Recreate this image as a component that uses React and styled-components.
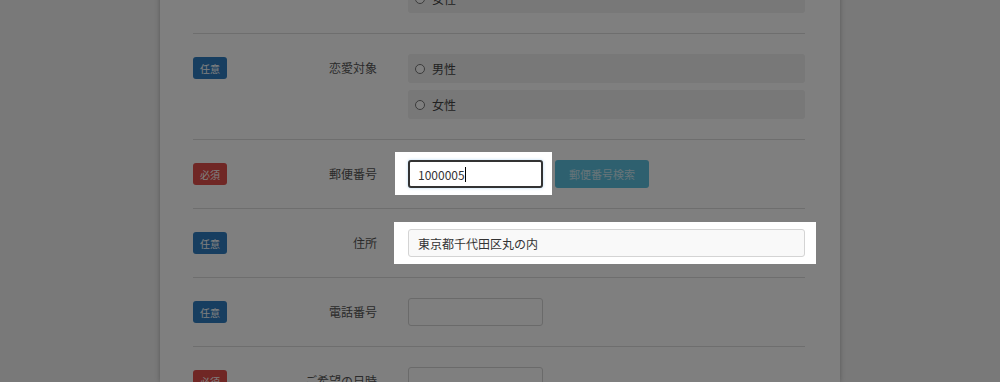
import React from "react";
import styled, { createGlobalStyle } from "styled-components";

const Global = createGlobalStyle`
  html, body { margin: 0; padding: 0; }
  body {
    background: #f2f2f2;
    font-family: "Noto Sans CJK JP", "Noto Sans", sans-serif;
    overflow: hidden;
    height: 382px;
  }
`;

const Page = styled.div`
  display: flex;
  justify-content: center;
  height: 382px;
  overflow: hidden;
`;

const Card = styled.div`
  width: 680px;
  background: #fff;
  box-shadow: 0 0 5px rgba(0, 0, 0, 0.28);
  padding: 0 35px 0 33px;
  box-sizing: border-box;
  margin-top: -16px;
`;

const Row = styled.div`
  display: grid;
  grid-template-columns: 184px 397px;
  column-gap: 31px;
  padding: 20px 0;
  border-top: ${(p) => (p.$first ? "none" : "1px solid #dcdcdc")};
  padding-top: ${(p) => (p.$first ? "0" : "20px")};
`;

const Head = styled.div`
  display: flex;
  align-items: flex-start;
  justify-content: space-between;
`;

const Badge = styled.span`
  display: inline-flex;
  align-items: center;
  justify-content: center;
  width: 34px;
  height: 22px;
  margin-top: 3px;
  border-radius: 3px;
  font-size: 10px;
  color: #fff;
  background: ${(p) => (p.$req ? "#e04e4a" : "#2f7dc0")};
`;

const Label = styled.span`
  font-size: 12px;
  line-height: 27px;
  color: #555;
  white-space: nowrap;
`;

const Options = styled.div`
  display: flex;
  flex-direction: column;
  gap: 7px;
`;

const Option = styled.label`
  display: flex;
  align-items: center;
  gap: 7px;
  height: 29px;
  padding-left: 7px;
  background: #f0f0f0;
  border-radius: 3px;
  font-size: 12px;
  color: #444;
`;

const Radio = styled.span`
  width: 8px;
  height: 8px;
  border: 1px solid #777;
  border-radius: 50%;
  background: #fff;
`;

const Controls = styled.div`
  display: flex;
  align-items: center;
  gap: 12px;
`;

const Spot = styled.div`
  position: relative;
  z-index: 20;
  background: #fff;
  padding: ${(p) => p.$pad};
  margin: ${(p) => p.$margin};
  display: flex;
`;

const FocusedField = styled.div`
  width: 135px;
  height: 28px;
  box-sizing: border-box;
  border: 2px solid #333;
  border-radius: 3px;
  box-shadow: 0 0 3px rgba(102, 175, 233, 0.5);
  padding: 0 8px;
  display: flex;
  align-items: center;
  font-size: 12px;
  color: #333;
  background: #fff;
`;

const Caret = styled.span`
  display: inline-block;
  width: 1px;
  height: 15px;
  background: #000;
`;

const Input = styled.input`
  width: ${(p) => p.$w || "135px"};
  height: 28px;
  box-sizing: border-box;
  border: 1px solid #d4d4d4;
  border-radius: 3px;
  padding: 0 9px;
  font-family: "Noto Sans CJK JP", "Noto Sans", sans-serif;
  font-size: 12px;
  color: #333;
  background: ${(p) => p.$bg || "#fff"};
  outline: none;
`;

const Button = styled.button`
  width: 94px;
  height: 28px;
  border: none;
  border-radius: 3px;
  background: #5cc0de;
  color: #cde9f2;
  font-family: "Noto Sans CJK JP", "Noto Sans", sans-serif;
  font-size: 11px;
  padding: 0;
`;

const Overlay = styled.div`
  position: fixed;
  inset: 0;
  z-index: 10;
  background: rgba(0, 0, 0, 0.5);
  pointer-events: none;
`;

export default function App() {
  return (
    <>
      <Global />
      <Page>
        <Card>
          <Row $first>
            <Head />
            <Options>
              <Option>
                <Radio />
                女性
              </Option>
            </Options>
          </Row>
          <Row>
            <Head>
              <Badge>任意</Badge>
              <Label>恋愛対象</Label>
            </Head>
            <Options>
              <Option>
                <Radio />
                男性
              </Option>
              <Option>
                <Radio />
                女性
              </Option>
            </Options>
          </Row>
          <Row>
            <Head>
              <Badge $req>必須</Badge>
              <Label>郵便番号</Label>
            </Head>
            <Controls>
              <Spot $pad="8px 9px 7px 13px" $margin="-8px -9px -7px -13px">
                <FocusedField>
                  1000005
                  <Caret />
                </FocusedField>
              </Spot>
              <Button disabled>郵便番号検索</Button>
            </Controls>
          </Row>
          <Row>
            <Head>
              <Badge>任意</Badge>
              <Label>住所</Label>
            </Head>
            <Controls>
              <Spot $pad="7px 11px 7px 14px" $margin="-7px -11px -7px -14px">
                <Input $w="397px" $bg="#f9f9f9" readOnly value="東京都千代田区丸の内" />
              </Spot>
            </Controls>
          </Row>
          <Row>
            <Head>
              <Badge>任意</Badge>
              <Label>電話番号</Label>
            </Head>
            <Controls>
              <Input readOnly value="" />
            </Controls>
          </Row>
          <Row>
            <Head>
              <Badge $req>必須</Badge>
              <Label>ご希望の日時</Label>
            </Head>
            <Controls>
              <Input readOnly value="" />
            </Controls>
          </Row>
        </Card>
      </Page>
      <Overlay />
    </>
  );
}
